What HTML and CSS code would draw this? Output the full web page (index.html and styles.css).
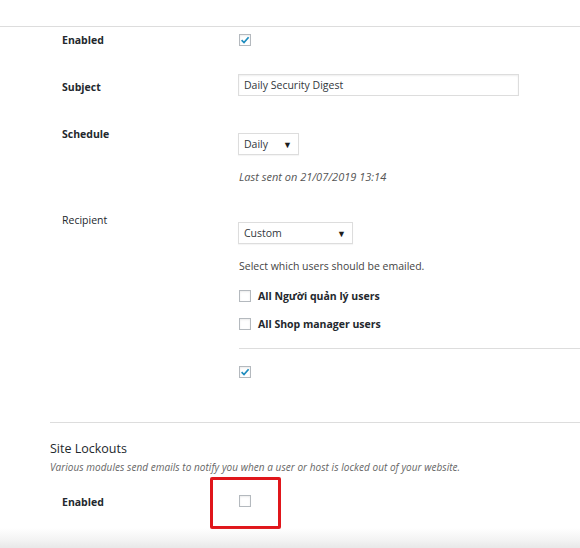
FILE: index.html
```html
<!DOCTYPE html>
<html>
<head>
<meta charset="utf-8">
<link rel="stylesheet" href="styles.css">
</head>
<body>
<div class="page">
  <div class="top-rule"></div>

  <div class="row row-enabled">
    <div class="label">Enabled</div>
    <div class="field">
      <span class="cb checked"><svg viewBox="0 0 12 12" width="12" height="12"><path d="M2.6 6.2 L5 8.6 L9.6 3.2" fill="none" stroke="#1e8cbe" stroke-width="1.7"/></svg></span>
    </div>
  </div>

  <div class="row row-subject">
    <div class="label">Subject</div>
    <div class="field">
      <div class="text-input">Daily Security Digest</div>
    </div>
  </div>

  <div class="row row-schedule">
    <div class="label">Schedule</div>
    <div class="field">
      <div class="select select-daily"><span>Daily</span><span class="arrow">▼</span></div>
      <p class="note">Last sent on 21/07/2019 13:14</p>
    </div>
  </div>

  <div class="row row-recipient">
    <div class="label label-normal">Recipient</div>
    <div class="field">
      <div class="select select-custom"><span>Custom</span><span class="arrow">▼</span></div>
      <p class="desc">Select which users should be emailed.</p>
      <div class="option option-first"><span class="cb"></span><span class="opt-label">All Người quản lý users</span></div>
      <div class="option"><span class="cb"></span><span class="opt-label">All Shop manager users</span></div>
      <div class="inner-rule"></div>
      <div class="option option-check"><span class="cb checked"><svg viewBox="0 0 12 12" width="12" height="12"><path d="M2.6 6.2 L5 8.6 L9.6 3.2" fill="none" stroke="#1e8cbe" stroke-width="1.7"/></svg></span></div>
    </div>
  </div>

  <div class="section">
    <h2 class="section-title">Site Lockouts</h2>
    <p class="section-desc">Various modules send emails to notify you when a user or host is locked out of your website.</p>
    <div class="row row-lockout">
      <div class="label">Enabled</div>
      <div class="field field-marked">
        <span class="cb"></span>
        <span class="highlight"></span>
      </div>
    </div>
  </div>

  <div class="bottom-fade"></div>
</div>
</body>
</html>
```

FILE: styles.css
```css
html, body {
  margin: 0;
  padding: 0;
  background: #ffffff;
}

.page {
  position: relative;
  width: 580px;
  height: 548px;
  overflow: hidden;
  font-family: "Open Sans", "Noto Sans", sans-serif;
  color: #444;
  font-size: 11px;
}

.top-rule {
  height: 26px;
  border-bottom: 1px solid #dddddd;
}

.row {
  display: grid;
  grid-template-columns: 177px 1fr;
  padding-left: 62px;
  align-items: start;
}

.label {
  font-weight: 700;
  font-size: 10.5px;
  line-height: 12px;
  color: #23282d;
}

.label-normal {
  font-weight: 400;
}

.field {
  display: flex;
  flex-direction: column;
  align-items: flex-start;
}

.cb {
  display: block;
  box-sizing: border-box;
  width: 12px;
  height: 12px;
  border: 1px solid #b4b9be;
  background: #fff;
  box-shadow: inset 0 1px 2px rgba(0,0,0,0.08);
  position: relative;
}

.cb svg {
  position: absolute;
  left: -1px;
  top: -1px;
}

.row-enabled {
  margin-top: 7px;
}

.row-subject {
  margin-top: 28px;
}

.row-subject .label {
  padding-top: 7px;
}

.text-input {
  box-sizing: border-box;
  width: 281px;
  height: 22px;
  border: 1px solid #dddddd;
  box-shadow: inset 0 1px 2px rgba(0,0,0,0.07);
  padding: 0 5px;
  line-height: 20px;
  font-size: 10.5px;
  color: #32373c;
  margin-left: -1px;
}

.row-schedule {
  margin-top: 32px;
}

.select {
  box-sizing: border-box;
  height: 22px;
  border: 1px solid #dddddd;
  box-shadow: 0 1px 1px rgba(0,0,0,0.04);
  display: flex;
  align-items: center;
  justify-content: space-between;
  padding: 0 6px 0 5px;
  font-size: 10.5px;
  color: #32373c;
  margin-left: -1px;
}

.arrow {
  font-size: 9px;
  color: #1d1d1d;
}

.select-daily {
  width: 61px;
  margin-top: 5px;
}

.note {
  margin: 15px 0 0;
  font-style: italic;
  font-size: 11px;
  line-height: 14px;
  color: #555;
}

.row-recipient {
  margin-top: 30px;
}

.select-custom {
  width: 115px;
  margin-top: 8px;
}

.desc {
  margin: 15px 0 0;
  font-size: 10.5px;
  line-height: 14px;
  color: #444;
}

.option {
  display: flex;
  align-items: center;
  gap: 7px;
  margin-top: 16px;
}

.option-first {
  margin-top: 17px;
}

.opt-label {
  font-weight: 700;
  font-size: 10.5px;
  line-height: 12px;
  color: #23282d;
}

.inner-rule {
  align-self: stretch;
  border-top: 1px solid #dddddd;
  margin-top: 18px;
}

.option-check {
  margin-top: 17px;
}

.section {
  margin-left: 50px;
  margin-top: 44px;
  border-top: 1px solid #dddddd;
}

.section-title {
  margin: 18px 0 0;
  font-size: 12.5px;
  font-weight: 400;
  line-height: 16px;
  color: #23282d;
}

.section-desc {
  margin: 4px 0 0;
  font-size: 10px;
  letter-spacing: 0.05px;
  font-style: italic;
  line-height: 12px;
  color: #666;
}

.row-lockout {
  padding-left: 12px;
  grid-template-columns: 177px 1fr;
  margin-top: 22px;
}

.row-lockout .label {
  padding-top: 1px;
}

.field-marked {
  position: relative;
}

.highlight {
  position: absolute;
  left: -29px;
  top: -18px;
  width: 71px;
  height: 52px;
  box-sizing: border-box;
  border: 3px solid #e0161b;
  border-radius: 2px;
}

.bottom-fade {
  position: absolute;
  left: 0;
  right: 0;
  bottom: 0;
  height: 20px;
  background: linear-gradient(to bottom, rgba(240,240,240,0) 0%, #f3f3f3 60%, #e8e8e8 100%);
}
```
